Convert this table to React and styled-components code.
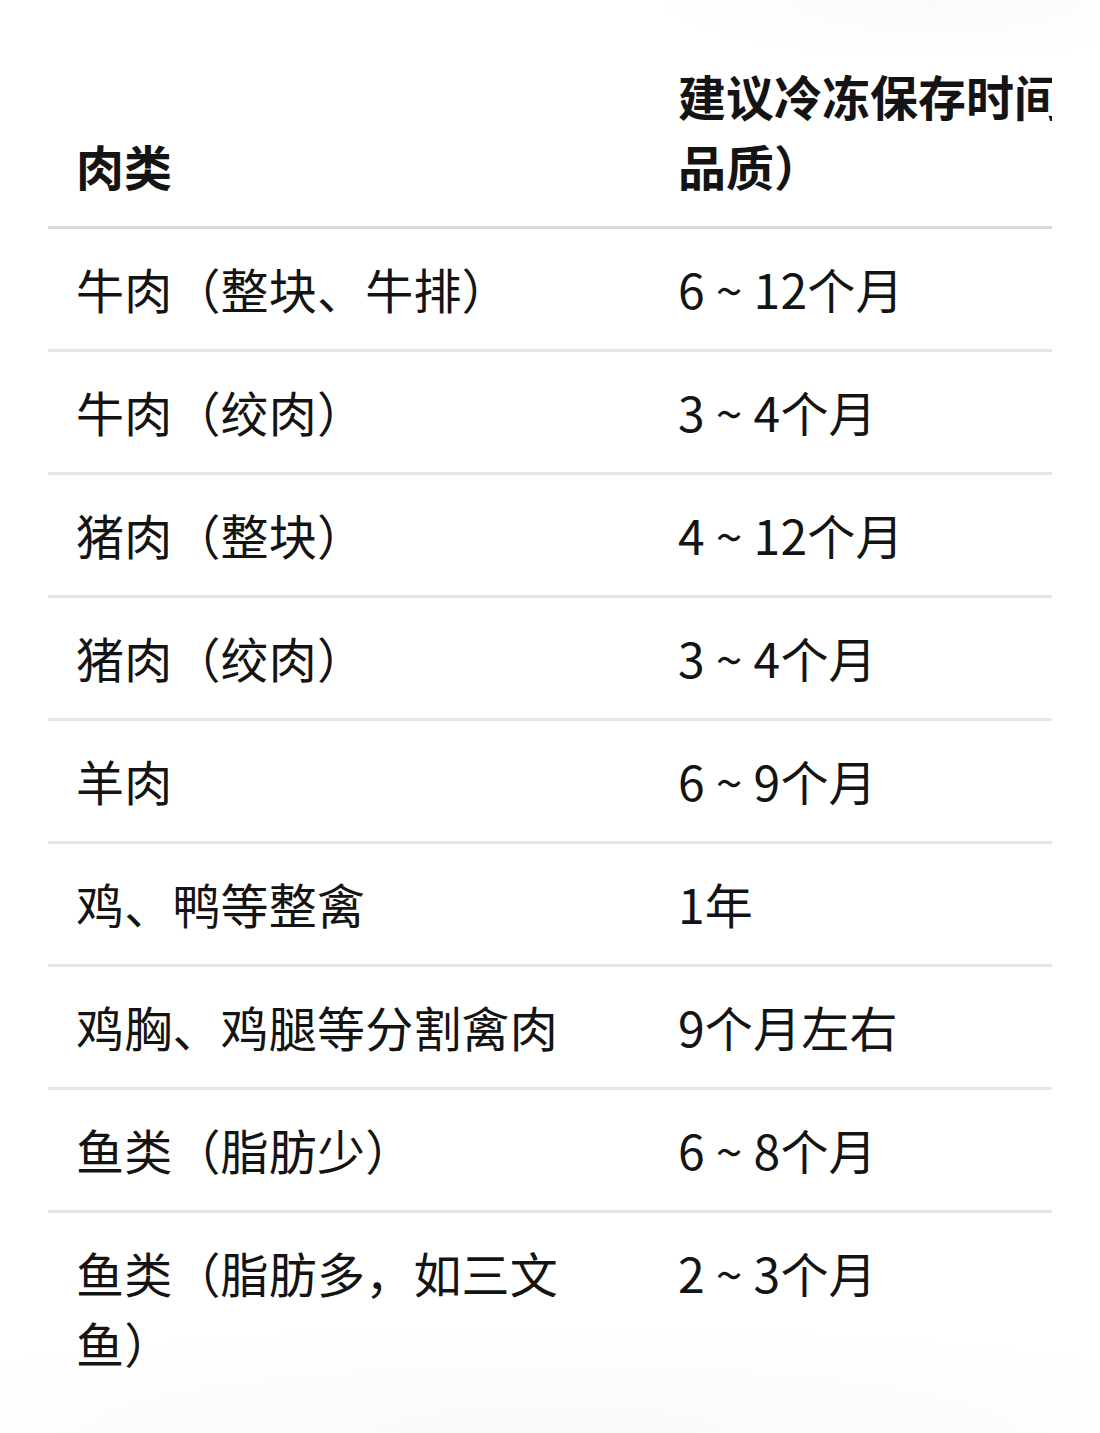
import React from 'react';
import styled, { createGlobalStyle } from 'styled-components';

// ============================================
// DATA
// ============================================
const rows = [
  { meat: '牛肉（整块、牛排）', time: '6 ~ 12个月' },
  { meat: '牛肉（绞肉）', time: '3 ~ 4个月' },
  { meat: '猪肉（整块）', time: '4 ~ 12个月' },
  { meat: '猪肉（绞肉）', time: '3 ~ 4个月' },
  { meat: '羊肉', time: '6 ~ 9个月' },
  { meat: '鸡、鸭等整禽', time: '1年' },
  { meat: '鸡胸、鸡腿等分割禽肉', time: '9个月左右' },
  { meat: '鱼类（脂肪少）', time: '6 ~ 8个月' },
  { meat: '鱼类（脂肪多，如三文鱼）', time: '2 ~ 3个月' },
];

// ============================================
// STYLED COMPONENTS
// ============================================
const GlobalStyle = createGlobalStyle`
  html, body {
    margin: 0;
    padding: 0;
  }

  body {
    min-height: 1433px;
    font-family: 'Noto Sans CJK SC', 'Noto Sans', sans-serif;
    color: #141414;
    background:
      radial-gradient(ellipse 70% 110px at 50% 100%, #f9f9f9 0%, rgba(255, 255, 255, 0) 100%),
      radial-gradient(ellipse 280px 60px at 85% 0%, #fafafa 0%, rgba(255, 255, 255, 0) 100%),
      #ffffff;
  }
`;

const Page = styled.div`
  padding: 35px 48px 0;
`;

const ScrollBox = styled.div`
  width: 1004px;
  overflow-x: auto;
  scrollbar-width: none;

  &::-webkit-scrollbar {
    display: none;
  }
`;

const Table = styled.table`
  border-collapse: collapse;
  table-layout: fixed;
  width: 1198px;
  font-size: 48px;
  line-height: 70px;
`;

const HeadCell = styled.th`
  width: ${props => props.$width}px;
  padding: 25px 28px 26px;
  text-align: left;
  vertical-align: bottom;
  font-weight: 700;
  border-bottom: 3px solid #d9d9d9;
`;

const BodyRow = styled.tr`
  border-bottom: 3px solid ${props => props.$last ? 'transparent' : '#e6e6e6'};
`;

const Cell = styled.td`
  padding: 24px 28px 26px;
  vertical-align: top;
  font-weight: 400;
  letter-spacing: 0.2px;
`;

// ============================================
// COMPONENT
// ============================================
const App = () => {
  return (
    <>
      <GlobalStyle />
      <Page>
        <ScrollBox>
          <Table>
            <thead>
              <tr>
                <HeadCell $width={546}>肉类</HeadCell>
                <HeadCell $width={540}>建议冷冻保存时间（最佳品质）</HeadCell>
              </tr>
            </thead>
            <tbody>
              {rows.map((row, i) => (
                <BodyRow key={row.meat} $last={i === rows.length - 1}>
                  <Cell>{row.meat}</Cell>
                  <Cell>{row.time}</Cell>
                </BodyRow>
              ))}
            </tbody>
          </Table>
        </ScrollBox>
      </Page>
    </>
  );
};

export default App;
